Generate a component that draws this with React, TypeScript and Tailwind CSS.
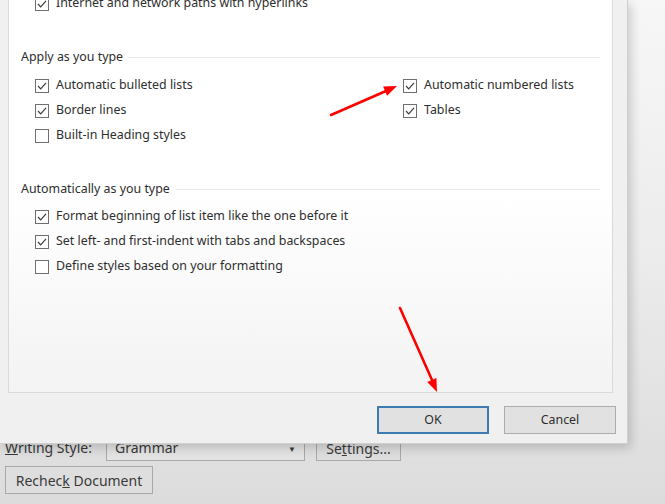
import React from "react";

const CheckBox = ({ checked }: { checked: boolean }) => (
  <svg width="14" height="14" viewBox="0 0 14 14" className="shrink-0">
    <rect x="0.5" y="0.5" width="13" height="13" fill="#ffffff" stroke="#6f6f6f" strokeWidth="1" />
    {checked && <polyline points="3,7 5.7,9.8 11,3.8" fill="none" stroke="#3c3c3c" strokeWidth="1.2" />}
  </svg>
);

const Row = ({ label, checked }: { label: string; checked: boolean }) => (
  <div className="h-[25px] flex items-center gap-[7px]">
    <CheckBox checked={checked} />
    <span className="whitespace-nowrap">{label}</span>
  </div>
);

const GroupTitle = ({ title }: { title: string }) => (
  <div className="h-[20px] flex items-center gap-[6px]">
    <span className="whitespace-nowrap">{title}</span>
    <span className="flex-1 h-px bg-[#e6e6e6]" />
  </div>
);

export default function App() {
  return (
    <div className="relative w-[665px] h-[504px] overflow-hidden bg-gradient-to-b from-[#f7f7f7] via-[#ececec] to-[#dcdcdc] font-['Noto_Sans',sans-serif] flex flex-col justify-end px-[5px] pb-[10px]">
      {/* the window behind the dialog */}
      <div className="h-[24px] flex items-center text-[14px] text-[#3a3a3a]">
        <span className="w-[101px] -mt-[3px]">
          <u>W</u>riting Style:
        </span>
        <div className="w-[199px] h-[23px] border border-[#a9a9a9] bg-[#e4e4e4] flex items-center px-[8px]">
          <span className="flex-1 -mt-[3px]">Grammar</span>
          <span className="text-[8px]">▼</span>
        </div>
        <button className="ml-[11px] w-[85px] h-[24px] border border-[#a9a9a9] bg-[#dedede] text-[14px] leading-[18px]">
          Se<u>t</u>tings...
        </button>
      </div>
      <button className="mt-[5px] w-[148px] h-[28px] border border-[#a9a9a9] bg-[#dedede] text-[14px] text-[#3a3a3a]">
        Rechec<u>k</u> Document
      </button>

      {/* AutoFormat dialog */}
      <div className="absolute left-0 top-0 w-[628px] h-[444px] flex flex-col bg-[#f0f0f0] border-r border-b border-[#cfcfcf] shadow-[3px_4px_10px_rgba(0,0,0,0.18)] text-[12.4px] text-[#2e2e2e]">
        <div className="ml-[8px] w-[605px] h-[393px] shrink-0 flex flex-col bg-gradient-to-b from-white via-white to-[#f3f3f3] border-x border-b border-[#dadada] pl-[12px] pr-[12px]">
          <div className="pl-[14px] -mt-[9px]">
            <Row label="Internet and network paths with hyperlinks" checked />
          </div>

          <div className="mt-[31px]">
            <GroupTitle title="Apply as you type" />
          </div>
          <div className="mt-[6px] pl-[14px] grid grid-cols-[368px_1fr]">
            <div>
              <Row label="Automatic bulleted lists" checked />
              <Row label="Border lines" checked />
              <Row label="Built-in Heading styles" checked={false} />
            </div>
            <div>
              <Row label="Automatic numbered lists" checked />
              <Row label="Tables" checked />
            </div>
          </div>

          <div className="mt-[31px]">
            <GroupTitle title="Automatically as you type" />
          </div>
          <div className="mt-[5px] pl-[14px]">
            <Row label="Format beginning of list item like the one before it" checked />
            <Row label="Set left- and first-indent with tabs and backspaces" checked />
            <Row label="Define styles based on your formatting" checked={false} />
          </div>
        </div>

        <div className="flex justify-end gap-[15px] pr-[11px] pt-[13px]">
          <button className="w-[112px] h-[28px] bg-[#e1e1e1] border-2 border-[#3d7cb3] text-[12.4px] text-[#2e2e2e]">
            OK
          </button>
          <button className="w-[112px] h-[28px] bg-[#e1e1e1] border border-[#adadad] text-[12.4px] text-[#2e2e2e]">
            Cancel
          </button>
        </div>
      </div>

      {/* red annotation arrows */}
      <svg className="absolute left-0 top-0 pointer-events-none" width="665" height="504">
        <line x1="331" y1="115" x2="386" y2="91" stroke="#ff0000" strokeWidth="2.6" strokeLinecap="round" />
        <polygon points="397,86 387.1,95.8 383.1,86.6" fill="#ff0000" />
        <line x1="400" y1="308" x2="432" y2="380" stroke="#ff0000" strokeWidth="2.6" strokeLinecap="round" />
        <polygon points="437,392 436.4,378.1 427.2,382.1" fill="#ff0000" />
      </svg>
    </div>
  );
}
